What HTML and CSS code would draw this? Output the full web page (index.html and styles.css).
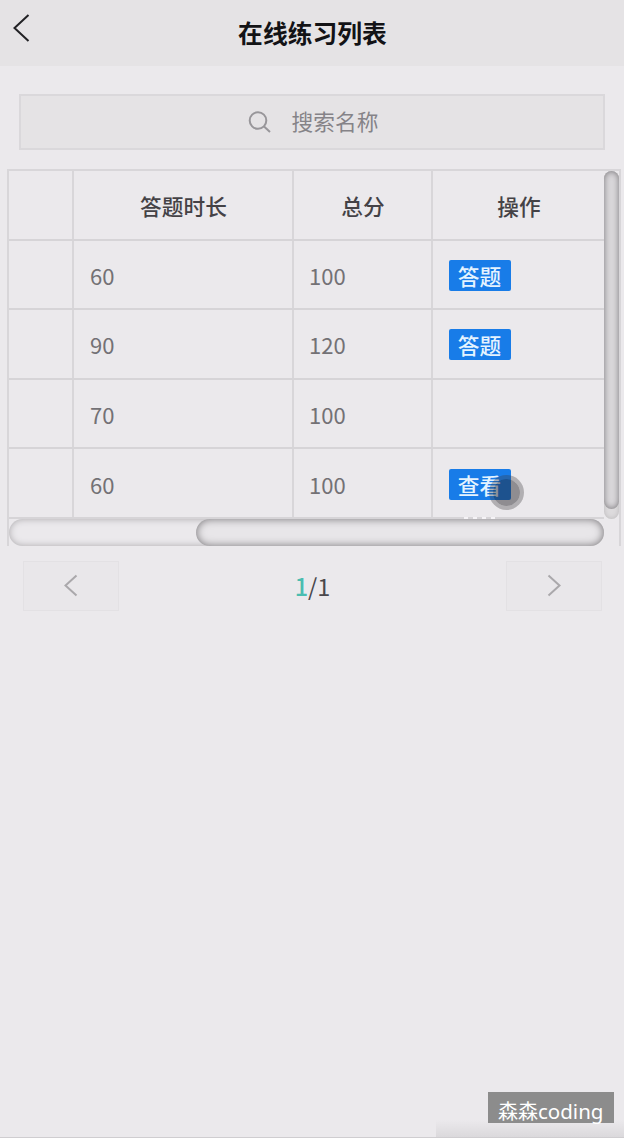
FILE: index.html
```html
<!DOCTYPE html>
<html lang="zh-CN">
<head>
<meta charset="utf-8">
<title>在线练习列表</title>
<link rel="stylesheet" href="styles.css">
</head>
<body>
<div class="page">
  <header class="header">
    <svg class="back" width="20" height="32" viewBox="0 0 20 32"><path d="M16.5 3 2.5 16 16.5 29"/></svg>
    <h1 class="title">在线练习列表</h1>
  </header>
  <div class="search">
    <svg class="search-icon" width="24" height="24" viewBox="0 0 24 24"><circle cx="10" cy="10.5" r="8.3"/><path d="M15.8 16.3 22 22"/></svg>
    <span class="placeholder">搜索名称</span>
  </div>
  <div class="table-box">
    <div class="table-view">
      <div class="row head"><div></div><div>答题时长</div><div>总分</div><div>操作</div></div>
      <div class="row"><div></div><div>60</div><div>100</div><div><span class="btn">答题</span></div></div>
      <div class="row"><div></div><div>90</div><div>120</div><div><span class="btn">答题</span></div></div>
      <div class="row"><div></div><div>70</div><div>100</div><div></div></div>
      <div class="row"><div></div><div>60</div><div>100</div><div><span class="btn">查看<i class="touch"></i></span><i class="trace"></i></div></div>
    </div>
    <div class="vtrack"><div class="vthumb"></div></div>
    <div class="htrack"><div class="hthumb"></div></div>
  </div>
  <nav class="pager">
    <div class="page-btn"><svg width="16" height="24" viewBox="0 0 16 24"><path d="M13.5 1.5 2.5 11.5 13.5 21.5"/></svg></div>
    <div class="count"><b>1</b>/1</div>
    <div class="page-btn"><svg width="16" height="24" viewBox="0 0 16 24"><path d="M2.5 1.5 13.5 11.5 2.5 21.5"/></svg></div>
  </nav>
  <div class="bottom-shade"></div>
  <div class="watermark"><span>森森</span>coding</div>
</div>
</body>
</html>
```
FILE: styles.css
```css
* { box-sizing: border-box; }
body { margin: 0; }
svg { display: block; fill: none; }
.page {
  position: relative;
  height: 1138px;
  overflow: hidden;
  background: #ebe9ec;
  border-bottom: 1px solid #cfcdd0;
  font-family: "Noto Sans CJK SC", sans-serif;
}
.header {
  display: grid;
  grid-template-columns: 40px 1fr 39px;
  height: 65.5px;
  background: #e5e3e5;
}
.back { margin: 12px 0 0 12px; stroke: #222225; stroke-width: 2; }
.title {
  margin: 0;
  text-align: center;
  font-size: 24.8px;
  line-height: 64px;
  font-weight: 700;
  color: #131316;
}
.search {
  display: flex;
  align-items: center;
  justify-content: center;
  gap: 20px;
  height: 56px;
  margin: 28px 19px 0;
  padding-left: 2px;
  border: 2px solid #dad8db;
  background: #e5e3e5;
}
.search-icon { stroke: #98969a; stroke-width: 2; }
.placeholder { font-size: 21.7px; color: #858388; line-height: 32px; margin-top: -1px; }
.table-box {
  display: grid;
  grid-template-columns: 595px 15px;
  grid-template-rows: 348px 27px;
  width: 614px;
  margin: 19.5px 0 0 7px;
  border: solid #d8d6d9;
  border-width: 2px 2px 0;
}
.table-view { display: flex; flex-direction: column; }
.row {
  display: grid;
  grid-template-columns: 65px 220px 139px 1fr;
  height: 69.6px;
  border-bottom: 2px solid #d6d4d7;
  font-size: 22px;
  color: #737175;
}
.row > div {
  position: relative;
  display: flex;
  align-items: center;
  padding-left: 16px;
  padding-top: 1px;
  border-right: 2px solid #d8d6d9;
}
.row > div:nth-child(3) { padding-left: 15px; }
.row > div:last-child { border-right: 0; padding-left: 15.5px; padding-top: 2px; }
.head { color: #444246; font-weight: 500; font-size: 21.7px; }
.head > div, .head > div:nth-child(3), .head > div:last-child { justify-content: center; padding: 2px 0 0 1px; }
.btn {
  position: relative;
  display: block;
  width: 62px;
  height: 31px;
  border-radius: 2px;
  background: #187ce8;
  color: #e4f3ff;
  font-size: 21.7px;
  line-height: 32px;
  font-weight: 500;
  text-align: center;
}
.touch {
  position: absolute;
  left: 40px;
  top: 6px;
  width: 35px;
  height: 35px;
  border-radius: 50%;
  background: rgba(35, 33, 36, .46);
  background-clip: padding-box;
  border: 4px solid rgba(60, 58, 61, .33);
}
.trace {
  position: absolute;
  left: 31px;
  bottom: -2px;
  width: 34px;
  height: 2px;
  background: repeating-linear-gradient(90deg, #f5f3f6 0 4px, transparent 4px 9px);
}
.vtrack {
  height: 348px;
  border-radius: 8px;
  background: #dddbdd;
  box-shadow: inset 0 0 5px #bbb9bb;
}
.vthumb {
  height: 338px;
  border-radius: 8px;
  background: #d9d7da;
  box-shadow: inset 0 0 6px #777578;
}
.htrack {
  width: 595px;
  height: 27px;
  border-radius: 14px;
  box-shadow: inset 0 0 7px #aaa8ab;
}
.hthumb {
  width: 408px;
  height: 27px;
  margin-left: 187px;
  border-radius: 14px;
  background: #e8e6e9;
  box-shadow: inset 0 0 8px #747275;
}
.pager {
  display: flex;
  align-items: center;
  justify-content: space-between;
  padding: 0 22px 0 23px;
  margin-top: 15px;
}
.page-btn {
  display: flex;
  justify-content: center;
  width: 96px;
  height: 50px;
  padding-top: 12px;
  border: 1px solid #e3e1e4;
  background: #e9e7ea;
  stroke: #aaa8ab;
  stroke-width: 2;
}
.count { font-size: 23.5px; line-height: 40px; color: #49474b; margin-top: -1px; }
.count b { font-weight: 500; color: #4bbdb0; }
.bottom-shade {
  position: absolute;
  left: 436px;
  right: 0;
  bottom: -1px;
  height: 18px;
  background: linear-gradient(#ebe9ec, #dad8db);
}
.watermark {
  position: absolute;
  left: 488px;
  top: 1092px;
  width: 126px;
  height: 31px;
  padding-left: 10px;
  background: #8c8c8c;
  color: #fff;
  font: 20.5px/38px "Noto Sans", "Noto Sans CJK SC", sans-serif;
  white-space: nowrap;
}
.watermark span { font-family: "Noto Sans CJK SC", sans-serif; font-size: 20px; font-weight: 400; }
```
